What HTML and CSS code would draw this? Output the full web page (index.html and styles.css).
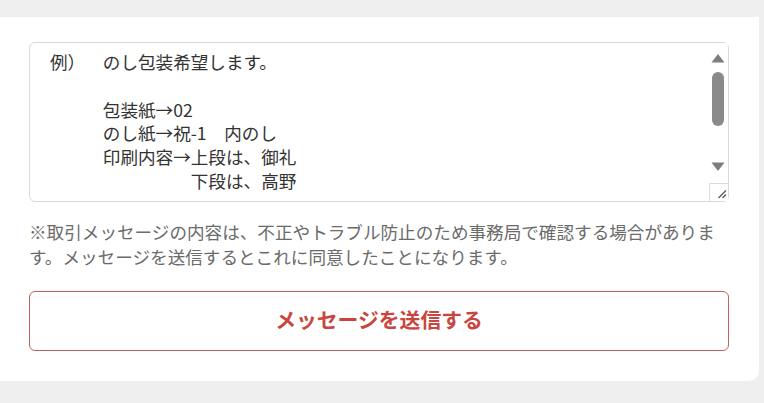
FILE: index.html
```html
<!DOCTYPE html>
<html lang="ja">
<head>
<meta charset="utf-8">
<link rel="stylesheet" href="styles.css">
</head>
<body>
<div class="page">
  <div class="card">
    <div class="field">
      <textarea class="message" spellcheck="false">例）　のし包装希望します。

　　　包装紙→02
　　　のし紙→祝-1　内のし
　　　印刷内容→上段は、御礼
　　　　　　　　下段は、高野
</textarea>
      <svg class="scrollbar" width="19" height="158" viewBox="0 0 19 158" aria-hidden="true">
        <rect x="0" y="0" width="19" height="158" fill="#fff"/>
        <polygon points="2.5,19.5 15.5,19.5 9,11" fill="#7d7d7d"/>
        <rect x="3" y="29" width="12" height="54" rx="6" fill="#8a8a8a"/>
        <polygon points="2.5,119.5 15.5,119.5 9,128" fill="#7d7d7d"/>
        <rect x="0.5" y="140.5" width="19" height="18" fill="#fff" stroke="#dcdcdc"/>
        <line x1="9.5" y1="155" x2="17" y2="147.5" stroke="#555" stroke-width="1.2"/>
        <line x1="13.5" y1="155" x2="17" y2="151.5" stroke="#555" stroke-width="1.2"/>
      </svg>
    </div>
    <p class="note">※取引メッセージの内容は、不正やトラブル防止のため事務局で確認する場合があります。メッセージを送信するとこれに同意したことになります。</p>
    <button class="send" type="button">メッセージを送信する</button>
  </div>
</div>
</body>
</html>
```

FILE: styles.css
```css
html, body {
  margin: 0;
  padding: 0;
  background: #efefef;
  font-family: "Noto Sans CJK JP", "Noto Sans", sans-serif;
}
.page {
  padding: 17px 0 0 0;
  height: 403px;
  box-sizing: border-box;
}
.card {
  width: 759px;
  box-sizing: border-box;
  background: #fff;
  border-radius: 0 0 10px 0;
  padding: 25px 30px 30px 29px;
  text-spacing-trim: space-all;
}
.field {
  position: relative;
  width: 700px;
  height: 160px;
}
.message {
  display: block;
  width: 700px;
  height: 160px;
  box-sizing: border-box;
  margin: 0;
  padding: 7px 20px;
  border: 1px solid #d9d9d9;
  border-radius: 6px;
  font-family: "Noto Sans CJK JP", sans-serif;
  font-size: 17.6px;
  line-height: 23.8px;
  color: #333;
  overflow: hidden;
  resize: none;
  outline: none;
  background: #fff;
  text-spacing-trim: space-all;
}
.scrollbar {
  position: absolute;
  top: 1px;
  right: 1px;
  display: block;
}
.note {
  margin: 17px 0 0 0;
  font-size: 17.6px;
  line-height: 25px;
  color: #6b6b6b;
}
.send {
  display: block;
  width: 700px;
  height: 60px;
  margin: 22px 0 0 0;
  padding: 0 0 4px 0;
  box-sizing: border-box;
  border: 1px solid #c4615a;
  border-radius: 6px;
  background: #fff;
  color: #c8463d;
  font-family: "Noto Sans CJK JP", sans-serif;
  font-size: 20.8px;
  font-weight: bold;
  cursor: pointer;
}
```
